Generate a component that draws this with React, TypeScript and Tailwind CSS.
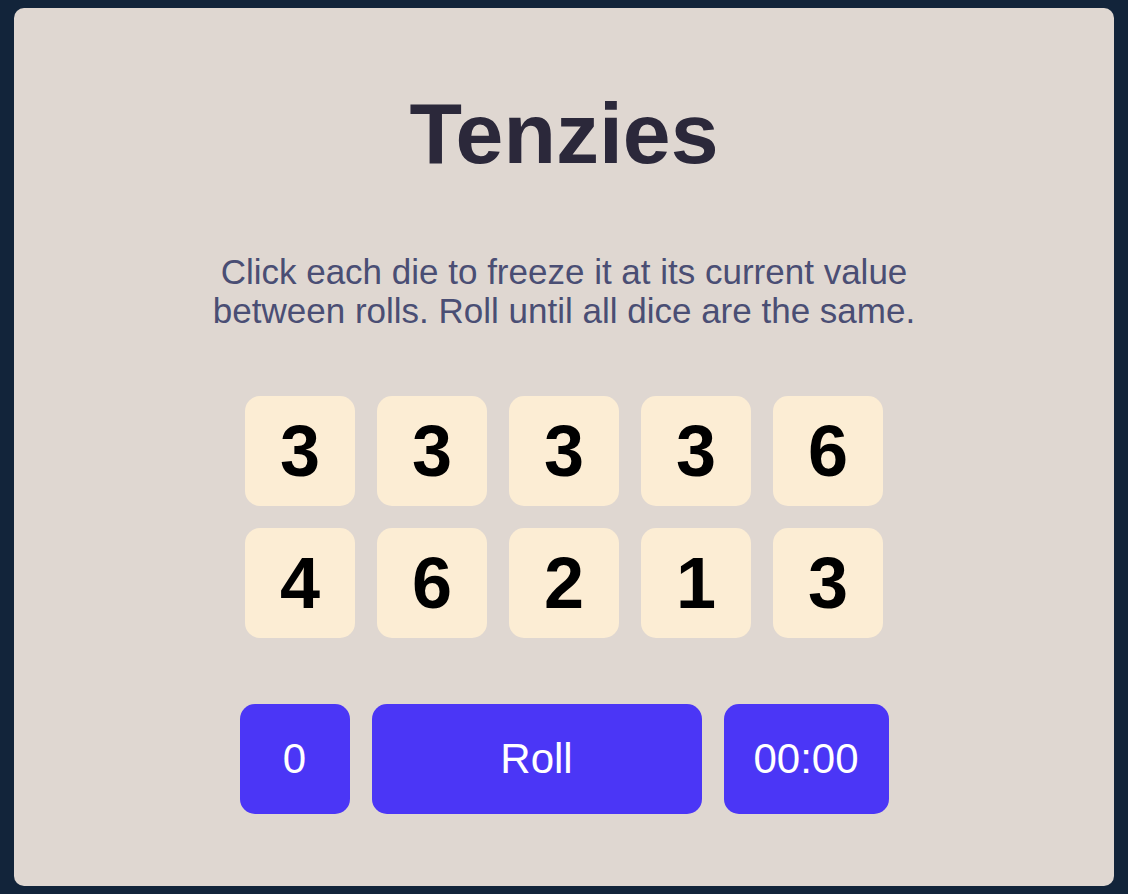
import React from "react";

const dice = [3, 3, 3, 3, 6, 4, 6, 2, 1, 3];

export default function App() {
  return (
    <div
      className="min-h-screen bg-[#12243a] px-[14px] py-[8px]"
      style={{ fontFamily: '"Liberation Sans", Arial, Helvetica, sans-serif' }}
    >
      <main className="flex h-[878px] flex-col items-center rounded-[10px] bg-[#dfd7d1] pt-[82px]">
        <h1 className="text-[86px] font-bold leading-[86px] text-[#2b283a]">Tenzies</h1>
        <p className="mt-[76px] text-center text-[35px] leading-[39px] text-[#4a4e74]">
          Click each die to freeze it at its current value
          <br />
          between rolls. Roll until all dice are the same.
        </p>
        <div className="mt-[66px] grid grid-cols-5 gap-[22px]">
          {dice.map((d, i) => (
            <button
              key={i}
              className="flex h-[110px] w-[110px] items-center justify-center rounded-[15px] bg-[#fcedd4] text-[72px] font-bold leading-none text-black"
            >
              {d}
            </button>
          ))}
        </div>
        <div className="mt-[66px] flex gap-[22px]">
          <div className="flex h-[110px] w-[110px] items-center justify-center rounded-[15px] bg-[#4b36f6] text-[42px] leading-none text-white">
            0
          </div>
          <button className="flex h-[110px] w-[330px] items-center justify-center rounded-[15px] bg-[#4b36f6] text-[42px] leading-none text-white">
            Roll
          </button>
          <div className="flex h-[110px] w-[165px] items-center justify-center rounded-[15px] bg-[#4b36f6] text-[42px] leading-none text-white">
            00:00
          </div>
        </div>
      </main>
    </div>
  );
}
